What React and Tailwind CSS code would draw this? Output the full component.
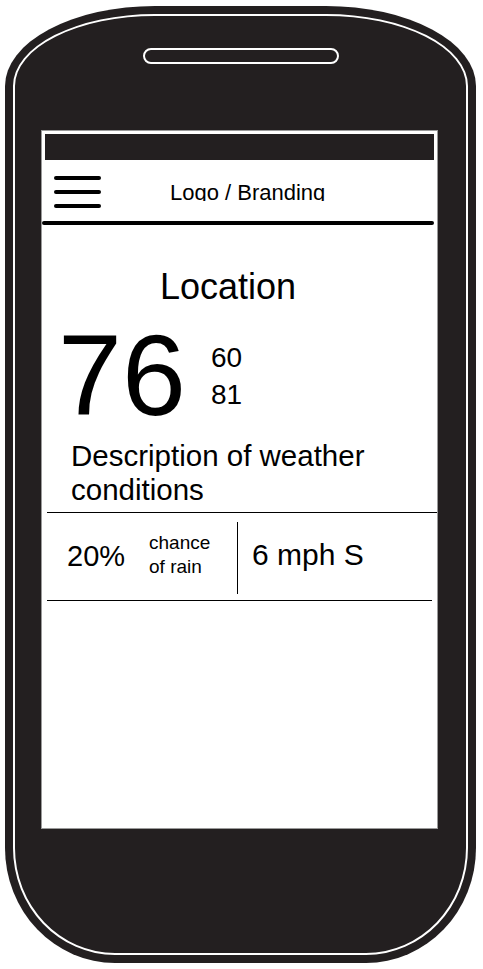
import React from 'react';

const font = { fontFamily: '"Liberation Sans", Arial, sans-serif' };

function Hamburger() {
  return (
    <div className="flex flex-col gap-[10px] w-[47px]">
      <div className="h-[4px] rounded-full bg-black" />
      <div className="h-[4px] rounded-full bg-black" />
      <div className="h-[4px] rounded-full bg-black" />
    </div>
  );
}

function Screen() {
  return (
    <div className="ml-[26px] self-start mt-[66px] w-[397px] h-[699px] bg-white border border-[#9a9a9a] text-black">
      <div className="mt-[3px] mx-[3px] h-[26px] bg-[#231f20]" />

      <div className="flex items-start mt-[16px] ml-[12px]">
        <Hamburger />
        <div className="ml-[69px] mt-[6px] h-[19px] overflow-hidden text-[22px] leading-none">
          Logo / Branding
        </div>
      </div>

      <div className="mt-[13px] w-[392px] h-[4px] rounded-full bg-black" />

      <div className="mt-[44px] ml-[118px] text-[36px] leading-none">Location</div>

      <div className="flex items-start mt-[13px] ml-[16px]">
        <div className="text-[115px] leading-none">76</div>
        <div className="ml-[25px] mt-[21px] text-[28px] leading-[37px]">
          <div>60</div>
          <div>81</div>
        </div>
      </div>

      <div className="mt-[6px] ml-[29px] w-[345px] text-[29.5px] leading-[34px]">
        Description of weather conditions
      </div>

      <div className="mt-[5px] ml-[5px] w-[390px] h-px bg-black" />

      <div className="flex items-start ml-[5px] h-[87px]">
        <div className="flex items-start w-[190px]">
          <div className="ml-[20px] mt-[29px] text-[29px] leading-none">20%</div>
          <div className="ml-[24px] mt-[18px] text-[19px] leading-[24px]">
            <div>chance</div>
            <div>of rain</div>
          </div>
        </div>
        <div className="mt-[9px] w-px h-[72px] bg-black" />
        <div className="ml-[14px] mt-[27px] text-[30px] leading-none">6 mph S</div>
      </div>

      <div className="ml-[5px] w-[385px] h-px bg-black" />
    </div>
  );
}

export default function App() {
  return (
    <div className="w-[483px] h-[969px] bg-white overflow-hidden" style={font}>
      <div className="ml-[5px] mt-[6px] w-[471px] h-[957px] p-[8px] bg-[#231f20] rounded-[150px_150px_110px_110px/80px_80px_115px_115px]">
        <div className="h-full flex flex-col items-center border-2 border-white rounded-[142px_142px_102px_102px/72px_72px_107px_107px]">
          <div className="mt-[32px] w-[196px] h-[16px] rounded-full border-2 border-white" />
          <Screen />
        </div>
      </div>
    </div>
  );
}
